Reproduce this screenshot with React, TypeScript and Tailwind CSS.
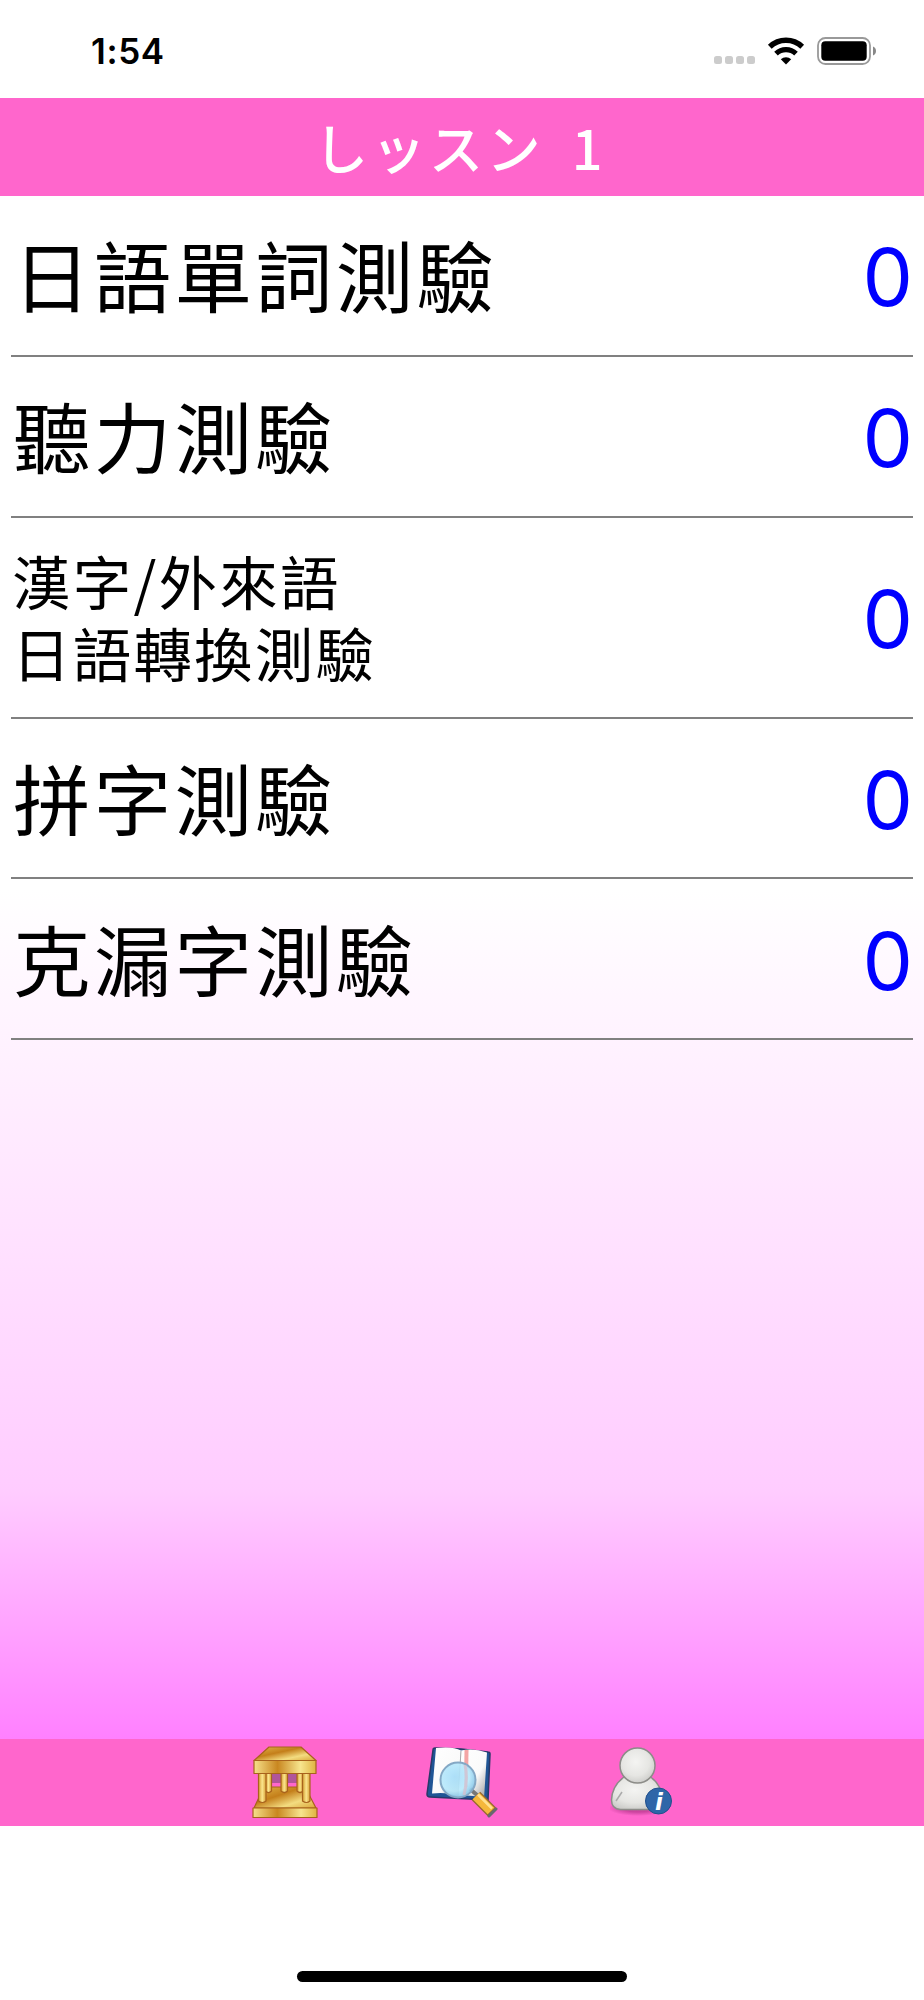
import React from "react";

interface Quiz {
  id: string;
  lines: string[];
  score: number;
}

const quizzes: Quiz[] = [
  { id: "words", lines: ["日語單詞測驗"], score: 0 },
  { id: "listening", lines: ["聽力測驗"], score: 0 },
  { id: "kanji", lines: ["漢字/外來語", "日語轉換測驗"], score: 0 },
  { id: "spelling", lines: ["拼字測驗"], score: 0 },
  { id: "cloze", lines: ["克漏字測驗"], score: 0 },
];

function WifiIcon() {
  return (
    <svg width="38" height="28" viewBox="0 0 38 28" fill="none">
      <path d="M2.8 9.8a23.5 23.5 0 0 1 32.4 0" stroke="#000" strokeWidth="5.4" />
      <path d="M9 16.6a14.5 14.5 0 0 1 20 0" stroke="#000" strokeWidth="5.2" />
      <path d="M19 27.5l-5.200-5.200a7.400 7.400 0 0 1 10.400 0z" fill="#000" />
    </svg>
  );
}

function BatteryIcon() {
  return (
    <svg width="60" height="28" viewBox="0 0 60 28">
      <rect x="1" y="1" width="52" height="26" rx="7.5" fill="none" stroke="#999" strokeWidth="1.8" />
      <rect x="4.3" y="4.3" width="45.4" height="19.4" rx="4" fill="#000" />
      <path d="M56 9.5c2 .8 3 2.4 3 4.5s-1 3.700-3 4.500z" fill="#888" />
    </svg>
  );
}

function TempleIcon() {
  return (
    <svg width="66" height="74" viewBox="0 0 66 74">
      <defs>
        <linearGradient id="roof" x1="0" y1="0" x2="1" y2="1">
          <stop offset="0" stopColor="#e3b64b" />
          <stop offset="0.4" stopColor="#c47f1a" />
          <stop offset="0.7" stopColor="#f3dc80" />
          <stop offset="1" stopColor="#d9a437" />
        </linearGradient>
        <linearGradient id="slab" x1="0" y1="0" x2="1" y2="0">
          <stop offset="0" stopColor="#f6e08a" />
          <stop offset="0.38" stopColor="#c98720" />
          <stop offset="0.75" stopColor="#f7e58e" />
          <stop offset="1" stopColor="#e0b340" />
        </linearGradient>
        <linearGradient id="column" x1="0" y1="0" x2="1" y2="0">
          <stop offset="0" stopColor="#d29b30" />
          <stop offset="0.5" stopColor="#fbe58d" />
          <stop offset="1" stopColor="#d8a238" />
        </linearGradient>
      </defs>
      <rect x="8" y="27" width="48" height="10" fill="#b0559a" />
      <g stroke="#a8621c" strokeWidth="1.2" strokeLinejoin="round">
        <path d="M12 41h41l11 21H2z" fill="url(#roof)" />
        <path d="M1 62h64v9.500H1z" fill="url(#slab)" />
        <path d="M13.500 26h6v19q-3 3-6 0z" fill="url(#column)" />
        <path d="M29 26h6.500v19q-3 3-6.500 0z" fill="url(#column)" />
        <path d="M45 26h6v19q-3 3-6 0z" fill="url(#column)" />
        <path d="M6.500 26h7.500v29q-3.500 3-7.500 0z" fill="url(#column)" />
        <path d="M50.500 26h7.500v29q-3.500 3-7.500 0z" fill="url(#column)" />
        <path d="M17 1h32l15 13.500H2z" fill="url(#roof)" />
        <path d="M2 14.500h62v13H2z" fill="url(#slab)" />
      </g>
    </svg>
  );
}

function DictionaryIcon() {
  return (
    <svg width="72" height="74" viewBox="0 0 72 74">
      <defs>
        <linearGradient id="page" x1="0" y1="0" x2="1" y2="1">
          <stop offset="0" stopColor="#fff" />
          <stop offset="0.6" stopColor="#fafafa" />
          <stop offset="1" stopColor="#999" />
        </linearGradient>
        <radialGradient id="lens" cx="0.4" cy="0.4" r="0.6">
          <stop offset="0" stopColor="#a6defa" />
          <stop offset="0.7" stopColor="#b8e9fb" />
          <stop offset="1" stopColor="#8cc9ea" />
        </radialGradient>
      </defs>
      <path d="M9 2l26 1 27 3q2 0 2 2l-2 46-58-3q-3 0-3-3L7 4q0-2 2-2z" fill="#205595" stroke="#283968" strokeWidth="1.500" />
      <path d="M10 2q17-2 25 2.500l-3 46q-11-5-26-3z" fill="url(#page)" />
      <path d="M35 4.500q12-3 26 2l-3 46q-14-5-26-2z" fill="url(#page)" />
      <path d="M35 5l-3 46" stroke="#aaa" />
      <path d="M38.500 4h4l-.5 37h-4z" fill="#f4a5a5" />
      <path d="M44 43l7 6" stroke="#777" strokeWidth="4" />
      <circle cx="32" cy="34" r="17.500" fill="url(#lens)" fillOpacity="0.9" stroke="#84a8c5" strokeWidth="2" />
      <path d="M39 19q3 14-1 30" stroke="#d8bccb" strokeWidth="3" fill="none" opacity="0.7" />
      <path d="M50 50l17 17" stroke="#96682e" strokeWidth="12" />
      <path d="M50 50l15 15" stroke="#f5b73b" strokeWidth="9.500" />
      <path d="M52 48.500l14 14" stroke="#ffe191" strokeWidth="2.500" />
      <path d="M63 70l7-7" stroke="#68686f" strokeWidth="3" strokeLinecap="round" />
    </svg>
  );
}

function UserInfoIcon() {
  return (
    <svg width="64" height="74" viewBox="0 0 64 74">
      <defs>
        <radialGradient id="skin" cx="0.45" cy="0.4" r="0.65">
          <stop offset="0" stopColor="#f4f4f2" />
          <stop offset="0.6" stopColor="#e6e6e3" />
          <stop offset="1" stopColor="#c9c9c6" />
        </radialGradient>
        <radialGradient id="shadow">
          <stop offset="0.5" stopColor="#a92d80" stopOpacity="0.6" />
          <stop offset="1" stopColor="#a92d80" stopOpacity="0" />
        </radialGradient>
      </defs>
      <ellipse cx="28" cy="62" rx="30" ry="8" fill="url(#shadow)" />
      <path d="M14 31Q2 40 1.500 54q0 9 9 9.500h35q8 0 7-10-1-15-12-22.500z" fill="url(#skin)" stroke="#8c8c88" strokeWidth="1.500" />
      <path d="M6 55l6-9" stroke="#aaa" strokeWidth="1.500" />
      <circle cx="27.500" cy="19.500" r="17.500" fill="url(#skin)" stroke="#8c8c88" strokeWidth="1.500" />
      <circle cx="48.500" cy="55" r="13" fill="#2f66a8" stroke="#214f8c" strokeWidth="1" />
      <text x="49" y="63.500" textAnchor="middle" fill="#fff" className="font-['DejaVu_Sans'] text-[23px] font-bold italic">
        i
      </text>
    </svg>
  );
}

function QuizRow({ quiz }: { quiz: Quiz }) {
  const isDouble = quiz.lines.length > 1;

  return (
    <li
      className={`flex items-center justify-between border-b-2 border-[#808080] pl-px ${
        isDouble ? "h-[201px]" : "h-[160.75px]"
      }`}
    >
      <div
        className={
          isDouble
            ? "pb-[2px] text-[58.5px] leading-[72px] tracking-[2.2px]"
            : "pb-[4px] pl-px text-[77.5px] leading-[96px] tracking-[3.2px]"
        }
      >
        {quiz.lines.map((line) => (
          <p key={line} className="whitespace-nowrap">
            {line}
          </p>
        ))}
      </div>
      <span className="pt-[4px] font-[Inter] text-[80px] leading-[96px] text-[#0000ff]">{quiz.score}</span>
    </li>
  );
}

export default function App() {
  return (
    <div className="flex h-[2000px] w-[924px] flex-col overflow-hidden bg-white font-['Noto_Sans_CJK_TC',sans-serif] text-black">
      {/* Status Bar */}
      <div className="flex h-[98px] shrink-0 items-start justify-between pl-[91px] pr-[47px]">
        <span className="mt-[28px] font-[Inter] text-[35px] font-semibold leading-[46px] tracking-[0.6px]">1:54</span>
        <div className="mt-[36.5px] flex items-start">
          <div className="mt-[19.5px] flex gap-[3px]">
            {[0, 1, 2, 3].map((dot) => (
              <span key={dot} className="h-2 w-2 rounded-[2.5px] bg-[#ccc]" />
            ))}
          </div>
          <div className="ml-3 flex gap-3">
            <WifiIcon />
            <BatteryIcon />
          </div>
        </div>
      </div>

      {/* Title */}
      <header className="flex h-[98px] shrink-0 items-center justify-center bg-[#ff66cc]">
        <h1 className="whitespace-pre pr-[4px] font-['Noto_Sans_CJK_JP',sans-serif] text-[54px] font-medium leading-[80px] tracking-[3.5px] text-white [word-spacing:12px]">
          しッスン 1
        </h1>
      </header>

      {/* Quiz List */}
      <main className="flex-1 bg-[linear-gradient(180deg,#fff_0%,#fff_45%,#ffccff_84%,#ff80ff_100%)]">
        <ul className="mx-[11px]">
          {quizzes.map((quiz) => (
            <QuizRow key={quiz.id} quiz={quiz} />
          ))}
        </ul>
      </main>

      {/* Bottom Toolbar */}
      <nav className="flex h-[87px] shrink-0 items-start bg-[#ff66cc] pl-[252px] pt-[7px]">
        <button aria-label="Home">
          <TempleIcon />
        </button>
        <button aria-label="Dictionary" className="ml-[108px]">
          <DictionaryIcon />
        </button>
        <button aria-label="About" className="ml-[112px]">
          <UserInfoIcon />
        </button>
      </nav>
      <div className="flex h-[174px] shrink-0 items-end justify-center pb-[18px]">
        <div className="h-[11px] w-[330px] rounded-full bg-black" />
      </div>
    </div>
  );
}
